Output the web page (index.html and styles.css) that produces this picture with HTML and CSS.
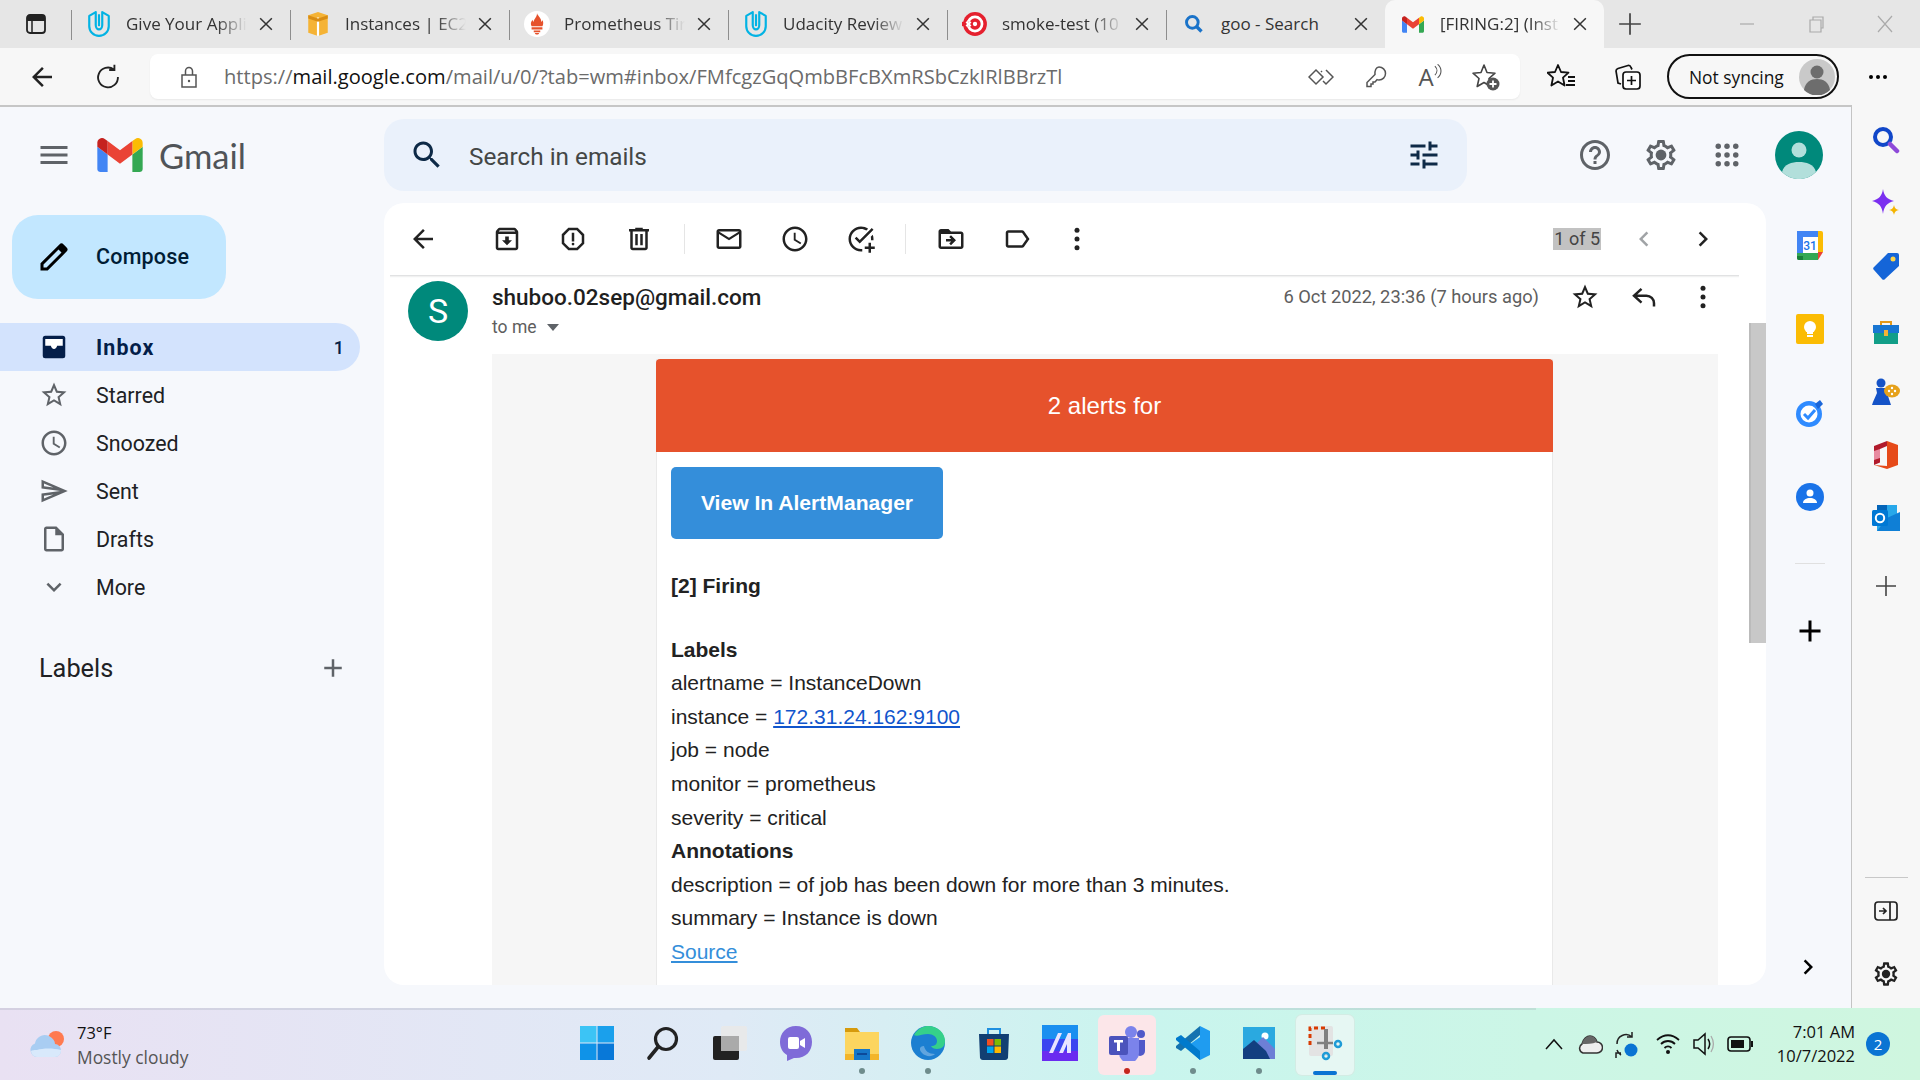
FILE: index.html
```html
<!DOCTYPE html>
<html lang="en">
<head>
<meta charset="utf-8">
<title>Gmail</title>
<link rel="stylesheet" href="styles.css">
</head>
<body>
<svg class="sprite" xmlns="http://www.w3.org/2000/svg">
<symbol id="m" viewBox="52 42 88 66"><path fill="#4285f4" d="M58 108h14V74L52 59v43c0 3.32 2.69 6 6 6"/><path fill="#34a853" d="M120 108h14c3.32 0 6-2.69 6-6V59l-20 15"/><path fill="#fbbc04" d="M120 48v26l20-15v-8c0-7.42-8.47-11.65-14.4-7.2"/><path fill="#ea4335" d="M72 74V48l24 18 24-18v26L96 92"/><path fill="#c5221f" d="M52 51v8l20 15V48l-5.6-4.2c-5.94-4.45-14.4-.22-14.4 7.2"/></symbol>
<symbol id="udacity" viewBox="0 0 24 24"><path fill="none" stroke="#02b3e4" stroke-width="2" stroke-linejoin="round" d="M3 4.500L9 1v12c0 2.500 1.500 4 3 4s3-1.500 3-4V1l6 3.500V14c0 5-4 9-9 9s-9-4-9-9z"/><path fill="none" stroke="#02b3e4" stroke-width="2" d="M12 3v11"/></symbol>
<symbol id="close" viewBox="0 0 24 24"><path fill="none" stroke="currentColor" stroke-width="1.8" d="M5 5l14 14M19 5L5 19"/></symbol>
<symbol id="thinplus" viewBox="0 0 24 24"><path fill="none" stroke="currentColor" stroke-width="1.6" d="M12 2v20M2 12h20"/></symbol>
<symbol id="menu" viewBox="0 0 24 24"><path d="M3 18h18v-2H3v2zm0-5h18v-2H3v2zm0-7v2h18V6H3z"/></symbol>
<symbol id="search" viewBox="0 0 24 24"><path d="M15.5 14h-.79l-.28-.27C15.41 12.59 16 11.11 16 9.5 16 5.91 13.09 3 9.5 3S3 5.91 3 9.5 5.91 16 9.5 16c1.61 0 3.09-.59 4.23-1.57l.27.28v.79l5 4.99L20.49 19l-4.99-5zm-6 0C7.01 14 5 11.99 5 9.5S7.01 5 9.5 5 14 7.01 14 9.5 11.99 14 9.5 14z"/></symbol>
<symbol id="tune" viewBox="0 0 24 24"><path d="M3 17v2h6v-2H3zM3 5v2h10V5H3zm10 16v-2h8v-2h-8v-2h-2v6h2zM7 9v2H3v2h4v2h2V9H7zm14 4v-2H11v2h10zm-6-4h2V7h4V5h-4V3h-2v6z"/></symbol>
<symbol id="help" viewBox="0 0 24 24"><path d="M11 18h2v-2h-2v2zm1-16C6.48 2 2 6.48 2 12s4.48 10 10 10 10-4.48 10-10S17.52 2 12 2zm0 18c-4.41 0-8-3.59-8-8s3.59-8 8-8 8 3.59 8 8-3.59 8-8 8zm0-14c-2.21 0-4 1.79-4 4h2c0-1.1.9-2 2-2s2 .9 2 2c0 2-3 1.75-3 5h2c0-2.25 3-2.5 3-5 0-2.21-1.79-4-4-4z"/></symbol>
<symbol id="gear" viewBox="0 0 24 24"><path d="M19.43 12.98c.04-.32.07-.64.07-.98 0-.34-.03-.66-.07-.98l2.11-1.65c.19-.15.24-.42.12-.64l-2-3.46c-.09-.16-.26-.25-.44-.25-.06 0-.12.01-.17.03l-2.49 1c-.52-.4-1.08-.73-1.69-.98l-.38-2.65C14.46 2.18 14.25 2 14 2h-4c-.25 0-.46.18-.49.42l-.38 2.65c-.61.25-1.17.59-1.69.98l-2.49-1c-.06-.02-.12-.03-.18-.03-.17 0-.34.09-.43.25l-2 3.46c-.13.22-.07.49.12.64l2.11 1.65c-.04.32-.07.65-.07.98 0 .33.03.66.07.98l-2.11 1.65c-.19.15-.24.42-.12.64l2 3.46c.09.16.26.25.44.25.06 0 .12-.01.17-.03l2.49-1c.52.4 1.08.73 1.69.98l.38 2.65c.03.24.24.42.49.42h4c.25 0 .46-.18.49-.42l.38-2.65c.61-.25 1.17-.59 1.69-.98l2.49 1c.06.02.12.03.18.03.17 0 .34-.09.43-.25l2-3.46c.12-.22.07-.49-.12-.64l-2.11-1.65zm-1.98-1.71c.04.31.05.52.05.73 0 .21-.02.43-.05.73l-.14 1.13.89.7 1.08.84-.7 1.21-1.27-.51-1.04-.42-.9.68c-.43.32-.84.56-1.25.73l-1.06.43-.16 1.13-.2 1.35h-1.4l-.19-1.35-.16-1.13-1.06-.43c-.43-.18-.83-.41-1.23-.71l-.91-.7-1.06.43-1.27.51-.7-1.21 1.08-.84.89-.7-.14-1.13c-.03-.31-.05-.54-.05-.74s.02-.43.05-.73l.14-1.13-.89-.7-1.08-.84.7-1.21 1.27.51 1.04.42.9-.68c.43-.32.84-.56 1.25-.73l1.06-.43.16-1.13.2-1.35h1.39l.19 1.35.16 1.13 1.06.43c.43.18.83.41 1.23.71l.91.7 1.06-.43 1.27-.51.7 1.21-1.07.85-.89.7.14 1.13z"/><circle cx="12" cy="12" r="3.6"/></symbol>
<symbol id="apps" viewBox="0 0 24 24"><g><circle cx="5" cy="5" r="2.2"/><circle cx="12" cy="5" r="2.2"/><circle cx="19" cy="5" r="2.2"/><circle cx="5" cy="12" r="2.2"/><circle cx="12" cy="12" r="2.2"/><circle cx="19" cy="12" r="2.2"/><circle cx="5" cy="19" r="2.2"/><circle cx="12" cy="19" r="2.2"/><circle cx="19" cy="19" r="2.2"/></g></symbol>
<symbol id="pencil" viewBox="0 0 24 24"><path d="M20.4 5.6l-2-2a2 2 0 0 0-2.8 0L3 16.2V21h4.8L20.4 8.4a2 2 0 0 0 0-2.8zM7 19H5v-2L15 7l2 2z"/></symbol>
<symbol id="inbox" viewBox="0 0 24 24"><rect x="3" y="3" width="18" height="18" rx="2" fill="#041e49"/><path d="M5 5.500h14V11h-4.500c-.3 1.500-1.300 2.500-2.500 2.500s-2.200-1-2.500-2.500H5z" fill="#fff"/></symbol>
<symbol id="star" viewBox="0 0 24 24"><path d="M22 9.24l-7.19-.62L12 2 9.19 8.63 2 9.24l5.46 4.73L5.82 21 12 17.27 18.18 21l-1.63-7.03L22 9.24zM12 15.4l-3.76 2.27 1-4.28-3.32-2.88 4.38-.38L12 6.1l1.71 4.04 4.38.38-3.32 2.88 1 4.28L12 15.4z"/></symbol>
<symbol id="clock" viewBox="0 0 24 24"><path d="M11.99 2C6.47 2 2 6.48 2 12s4.47 10 9.99 10C17.52 22 22 17.52 22 12S17.52 2 11.99 2zM12 20c-4.42 0-8-3.58-8-8s3.58-8 8-8 8 3.58 8 8-3.58 8-8 8zm.5-13H11v6l5.25 3.15.75-1.23-4.5-2.67z"/></symbol>
<symbol id="send" viewBox="0 0 24 24"><path d="M4.01 6.03l7.51 3.22-7.52-1 .01-2.22m7.5 8.72L4 17.97v-2.22l7.51-1M2.01 3L2 10l15 2-15 2 .01 7L23 12 2.01 3z"/></symbol>
<symbol id="draft" viewBox="0 0 24 24"><path d="M14 2H6c-1.100 0-2 .9-2 2v16c0 1.100.9 2 2 2h12c1.100 0 2-.9 2-2V8l-6-6zM6 20V4h7v5h5v11H6z"/></symbol>
<symbol id="expand" viewBox="0 0 24 24"><path d="M16.590 8.590L12 13.170 7.410 8.590 6 10l6 6 6-6z"/></symbol>
<symbol id="add" viewBox="0 0 24 24"><path d="M19 13h-6v6h-2v-6H5v-2h6V5h2v6h6v2z"/></symbol>
<symbol id="back" viewBox="0 0 24 24"><path d="M20 11H7.830l5.590-5.590L12 4l-8 8 8 8 1.410-1.410L7.830 13H20v-2z"/></symbol>
<symbol id="archive" viewBox="0 0 24 24"><path d="M20.540 5.230l-1.390-1.680C18.880 3.210 18.470 3 18 3H6c-.47 0-.88.21-1.160.55L3.460 5.230C3.170 5.570 3 6.020 3 6.500V19c0 1.100.9 2 2 2h14c1.100 0 2-.9 2-2V6.500c0-.48-.17-.93-.46-1.270zM6.240 5h11.520l.83 1H5.420l.82-1zM5 19V8h14v11H5zm8.450-9h-2.900v3H8l4 4 4-4h-2.550z"/></symbol>
<symbol id="report" viewBox="0 0 24 24"><path d="M15.730 3H8.270L3 8.270v7.460L8.270 21h7.460L21 15.730V8.270L15.730 3zM19 14.900L14.900 19H9.100L5 14.900V9.100L9.100 5h5.800L19 9.100v5.800z"/><path d="M11 7h2v7h-2z"/><circle cx="12" cy="16" r="1.100"/></symbol>
<symbol id="trash" viewBox="0 0 24 24"><path d="M15 4V3H9v1H4v2h1v13c0 1.100.9 2 2 2h10c1.100 0 2-.9 2-2V6h1V4h-5zm2 15H7V6h10v13zM9 8h2v9H9zm4 0h2v9h-2z"/></symbol>
<symbol id="mail" viewBox="0 0 24 24"><path d="M20 4H4c-1.100 0-2 .9-2 2v12c0 1.100.9 2 2 2h16c1.100 0 2-.9 2-2V6c0-1.100-.9-2-2-2zm0 14H4V8l8 5 8-5v10zm-8-7L4 6h16l-8 5z"/></symbol>
<symbol id="addtask" viewBox="0 0 24 24"><path d="M22 4.500L11 15.500l-4-4 1.400-1.400 2.600 2.600L20.600 3.100zM19.800 10.200c.13.57.2 1.170.2 1.800 0 .35-.02.68-.06 1h2.020c.03-.33.04-.66.04-1 0-1.190-.22-2.330-.6-3.390zM16.300 5.250l1.440-1.440C16.100 2.670 14.130 2 12 2 6.480 2 2 6.480 2 12s4.480 10 10 10c.34 0 .67-.01 1-.04v-2.020c-.33.04-.66.06-1 .06-4.420 0-8-3.580-8-8s3.580-8 8-8c1.580 0 3.040.46 4.300 1.250zM18 15h2v3h3v2h-3v3h-2v-3h-3v-2h3z"/></symbol>
<symbol id="move" viewBox="0 0 24 24"><path d="M20 6h-8l-2-2H4c-1.100 0-1.990.9-1.990 2L2 18c0 1.100.9 2 2 2h16c1.100 0 2-.9 2-2V8c0-1.100-.9-2-2-2zm0 12H4V8h16v10zm-8.010-9l-1.410 1.410L12.160 12H8v2h4.160l-1.590 1.590L11.990 17 16 13.010 11.990 9z"/></symbol>
<symbol id="label" viewBox="0 0 24 24"><path d="M17.630 5.840C17.270 5.330 16.670 5 16 5L5 5.010C3.900 5.010 3 5.900 3 7v10c0 1.100.9 1.990 2 1.990L16 19c.67 0 1.270-.33 1.630-.84L22 12l-4.370-6.160zM16 17H5V7h11l3.550 5L16 17z"/></symbol>
<symbol id="vert" viewBox="0 0 24 24"><circle cx="12" cy="5" r="2"/><circle cx="12" cy="12" r="2"/><circle cx="12" cy="19" r="2"/></symbol>
<symbol id="left" viewBox="0 0 24 24"><path d="M15.410 7.410L14 6l-6 6 6 6 1.410-1.410L10.830 12z"/></symbol>
<symbol id="right" viewBox="0 0 24 24"><path d="M10 6L8.590 7.410 13.170 12l-4.580 4.590L10 18l6-6z"/></symbol>
<symbol id="reply" viewBox="0 0 24 24"><path fill="none" stroke="currentColor" stroke-width="2" d="M10 5.500L4 11l6 5.500M4 11h10a6 6 0 0 1 6 6v2.500"/></symbol>
</svg>

<div class="browser">
  <header class="tabbar">
    <div class="tabbtn"><svg class="ic22" viewBox="0 0 22 22"><rect x="2" y="2" width="18" height="18" rx="3" fill="none" stroke="#222" stroke-width="1.800"/><path d="M2 5a3 3 0 0 1 3-3h12a3 3 0 0 1 3 3v3H2z" fill="#222"/><path d="M7 8v12" stroke="#222" stroke-width="1.500"/></svg></div>
    <div class="tab"><span class="tabsep"></span><svg class="fav"><use href="#udacity"/></svg><span class="tabtitle">Give Your Appli</span><svg class="tabx"><use href="#close"/></svg></div>
    <div class="tab"><span class="tabsep"></span><svg class="fav" viewBox="0 0 24 24"><path fill="#f5b335" d="M12 1l9 3v16l-9 3-9-3V4z"/><path fill="#fff" d="M11 6h2v17h-2z"/><path fill="#d98d14" d="M3 4l9 3 9-3v3l-9 3-9-3z"/></svg><span class="tabtitle">Instances | EC2</span><svg class="tabx"><use href="#close"/></svg></div>
    <div class="tab"><span class="tabsep"></span><svg class="fav" viewBox="0 0 24 24"><circle cx="12" cy="12" r="12" fill="#fff"/><path fill="#e6522c" d="M12 2c1 3 4 4 4 8 1-.5 1-1.500 1-2 1 2 1 4 0 6H7c-1-2-1-4 1-6 0 1 .5 1.500 1 2 0-3 3-4 3-8zM7 15h10v2H7zm2 3h6v1.500H9zm1 2.200h4c-.3 1-1 1.500-2 1.500s-1.700-.5-2-1.500z"/></svg><span class="tabtitle">Prometheus Tir</span><svg class="tabx"><use href="#close"/></svg></div>
    <div class="tab"><span class="tabsep"></span><svg class="fav"><use href="#udacity"/></svg><span class="tabtitle">Udacity Review</span><svg class="tabx"><use href="#close"/></svg></div>
    <div class="tab"><span class="tabsep"></span><svg class="fav" viewBox="0 0 24 24"><circle cx="12" cy="12" r="11" fill="#e5202e"/><circle cx="12" cy="12" r="6.500" fill="none" stroke="#fff" stroke-width="2.500"/><path stroke="#e5202e" stroke-width="4" d="M0 12h9"/><path stroke="#fff" stroke-width="2" d="M4 10l4 4M8 10l-4 4"/><circle cx="12" cy="12" r="2" fill="#fff"/></svg><span class="tabtitle">smoke-test (10</span><svg class="tabx"><use href="#close"/></svg></div>
    <div class="tab"><span class="tabsep"></span><svg class="fav favsmall" viewBox="0 0 24 24"><circle cx="10" cy="10" r="7" fill="none" stroke="#1a73c9" stroke-width="3.500"/><path stroke="#1a73c9" stroke-width="4" d="M15 15l6 6"/></svg><span class="tabtitle tabtitle-full">goo - Search</span><svg class="tabx"><use href="#close"/></svg></div>
    <div class="tab tab-active"><svg class="fav favm"><use href="#m"/></svg><span class="tabtitle">[FIRING:2] (Inst</span><svg class="tabx"><use href="#close"/></svg></div>
    <svg class="newtab"><use href="#thinplus"/></svg>
    <div class="winctl">
      <svg class="winbtn" viewBox="0 0 20 20"><path stroke="#aaa" stroke-width="1.200" d="M3 10h14"/></svg>
      <svg class="winbtn" viewBox="0 0 20 20"><path fill="none" stroke="#aaa" stroke-width="1.200" d="M4 6h11v12H4zM7 6V3h10v11h-2"/></svg>
      <svg class="winbtn" viewBox="0 0 20 20"><path stroke="#aaa" stroke-width="1.200" d="M3 2l14 16M17 2L3 18"/></svg>
    </div>
  </header>

  <div class="addrrow">
    <div class="navbtn"><svg class="ic30 dark"><use href="#back"/></svg></div>
    <div class="navbtn"><svg class="ic28" viewBox="0 0 24 24"><path fill="none" stroke="#222" stroke-width="1.600" d="M17 5.500A8.500 8.500 0 1 0 20.500 12M17.500 1.500v4.500H13"/></svg></div>
    <div class="addrbar">
      <svg class="lock" viewBox="0 0 24 24"><path fill="none" stroke="#555" stroke-width="1.500" d="M5 10h14v12H5zM8.500 10V6a3.500 3.500 0 0 1 7 0v4"/><circle cx="12" cy="16" r="1.200" fill="#555"/></svg>
      <div class="url">https://<b class="urlhost">mail.google.com</b>/mail/u/0/?tab=wm#inbox/FMfcgzGqQmbBFcBXmRSbCzkIRlBBrzTl</div>
      <div class="addric"><svg class="ic26" viewBox="0 0 26 26"><path fill="none" stroke="#555" stroke-width="1.500" d="M8 6l-7 7 7 7 7-7zM14 7l-1 1M18 6l7 7-7 7-3-3"/></svg></div>
      <div class="addric"><svg class="ic26" viewBox="0 0 26 26"><path fill="none" stroke="#555" stroke-width="1.500" d="M16 3a6.500 6.500 0 0 1 0 13c-1 0-1.500 0-2-.3L12 18h-2v2H8v2.500H4v-4l8-8c-.3-4 1-7.500 4-7.500z"/></svg></div>
      <div class="addric"><span class="readaloud">A</span><svg class="waves" viewBox="0 0 10 16"><path fill="none" stroke="#555" stroke-width="1.200" d="M1 2c3 3 3 7 0 10M4 0c5 4 5 11 0 15"/></svg></div>
      <div class="addric"><svg class="ic30" viewBox="0 0 30 30"><path fill="none" stroke="#444" stroke-width="1.600" stroke-linejoin="round" d="M13 3l3 7.500 8 .7-6 5.300 1.800 8-6.800-4-6.800 4 1.800-8-6-5.300 8-.7z"/><circle cx="22" cy="22" r="6.500" fill="#555"/><path stroke="#fff" stroke-width="1.800" d="M22 18.500v7M18.500 22h7"/></svg></div>
    </div>
    <div class="navbtn navfav"><svg class="ic30" viewBox="0 0 30 30"><path fill="none" stroke="#111" stroke-width="1.800" stroke-linejoin="round" d="M11 3l3 7 7.500.7-5.500 5 1.600 7.800-6.600-4-6.600 4 1.600-7.800-5.500-5 7.500-.7z"/><path stroke="#111" stroke-width="1.800" d="M21 15h7M21 19h7M19 23h9"/></svg></div>
    <div class="navbtn"><svg class="ic30" viewBox="0 0 30 30"><path fill="none" stroke="#111" stroke-width="1.700" d="M8 22l-3-1-2-12c0-1 .5-2 2-2.500l10-3c1.500-.3 2.500.5 3 2l1 2"/><rect x="10" y="10" width="17" height="17" rx="3" fill="#fff" stroke="#111" stroke-width="1.700"/><path stroke="#111" stroke-width="1.700" d="M18.500 14v9M14 18.500h9"/></svg></div>
    <div class="syncpill"><span class="synctext">Not syncing</span><svg class="syncav" viewBox="0 0 36 36"><circle cx="18" cy="18" r="18" fill="#c9c9c9"/><circle cx="18" cy="13" r="6.500" fill="#6d6d6d"/><path d="M5 31c1-8 7-11 13-11s12 3 13 11a18 18 0 0 1-26 0z" fill="#6d6d6d"/></svg></div>
    <div class="navbtn navdots"><svg class="ic24" viewBox="0 0 24 24"><circle cx="5" cy="12" r="2"/><circle cx="12" cy="12" r="2"/><circle cx="19" cy="12" r="2"/></svg></div>
  </div>

  <div class="workspace">
    <div class="gmail">
      <div class="logo">
        <svg class="ic36 grey hamb"><use href="#menu"/></svg>
        <svg class="mlogo"><use href="#m"/></svg>
        <span class="wordmark">Gmail</span>
      </div>
      <div class="topbar">
        <div class="searchbox">
          <svg class="ic36 navy"><use href="#search"/></svg>
          <span class="searchtext">Search in emails</span>
          <svg class="ic36 navy"><use href="#tune"/></svg>
        </div>
        <div class="topicon topfirst"><svg class="ic36 grey"><use href="#help"/></svg></div>
        <div class="topicon"><svg class="ic36 grey"><use href="#gear"/></svg></div>
        <div class="topicon"><svg class="ic30 grey"><use href="#apps"/></svg></div>
        <svg class="useravatar" viewBox="0 0 48 48"><circle cx="24" cy="24" r="24" fill="#00897b"/><circle cx="24" cy="19" r="7.500" fill="#b2dfdb"/><path d="M7 41c2-8 10-10 17-10s15 2 17 10a24 24 0 0 1-34 0z" fill="#b2dfdb"/></svg>
      </div>

      <nav class="nav">
        <div class="compose"><svg class="ic36 black"><use href="#pencil"/></svg><span class="composetxt">Compose</span></div>
        <ul class="navlist">
          <li class="navrow navrow-on"><svg class="ic30"><use href="#inbox"/></svg><span class="navlabel">Inbox</span><span class="navcount">1</span></li>
          <li class="navrow"><svg class="ic30 grey"><use href="#star"/></svg><span class="navlabel">Starred</span></li>
          <li class="navrow"><svg class="ic30 grey"><use href="#clock"/></svg><span class="navlabel">Snoozed</span></li>
          <li class="navrow"><svg class="ic30 grey"><use href="#send"/></svg><span class="navlabel">Sent</span></li>
          <li class="navrow"><svg class="ic30 grey"><use href="#draft"/></svg><span class="navlabel">Drafts</span></li>
          <li class="navrow"><svg class="ic30 grey"><use href="#expand"/></svg><span class="navlabel">More</span></li>
        </ul>
        <div class="labelsrow"><span class="labelstxt">Labels</span><svg class="ic30 grey"><use href="#add"/></svg></div>
      </nav>

      <main class="card">
        <div class="toolbar">
          <div class="tbtn tback"><svg class="ic30"><use href="#back"/></svg></div>
          <div class="tbtn tarch"><svg class="ic30"><use href="#archive"/></svg></div>
          <div class="tbtn"><svg class="ic30"><use href="#report"/></svg></div>
          <div class="tbtn"><svg class="ic30"><use href="#trash"/></svg></div>
          <span class="tdiv"></span>
          <div class="tbtn"><svg class="ic30"><use href="#mail"/></svg></div>
          <div class="tbtn"><svg class="ic30"><use href="#clock"/></svg></div>
          <div class="tbtn"><svg class="ic30"><use href="#addtask"/></svg></div>
          <span class="tdiv tdiv2"></span>
          <div class="tbtn"><svg class="ic30"><use href="#move"/></svg></div>
          <div class="tbtn"><svg class="ic30"><use href="#label"/></svg></div>
          <div class="tbtn tmore"><svg class="ic30"><use href="#vert"/></svg></div>
          <span class="pager">1 of 5</span>
          <div class="mbtn pagerprev"><svg class="ic30"><use href="#left"/></svg></div>
          <div class="mbtn"><svg class="ic30"><use href="#right"/></svg></div>
        </div>
        <div class="msgwrap">
          <div class="message">
            <div class="msghead">
              <div class="senderav">S</div>
              <div class="sender">
                <div class="sendername">shuboo.02sep@gmail.com</div>
                <div class="tome">to me <span class="caret"></span></div>
              </div>
              <span class="msgdate">6 Oct 2022, 23:36 (7 hours ago)</span>
              <div class="mbtn"><svg class="ic30"><use href="#star"/></svg></div>
              <div class="mbtn"><svg class="ic30"><use href="#reply"/></svg></div>
              <div class="mbtn"><svg class="ic30"><use href="#vert"/></svg></div>
            </div>
            <div class="mailbg">
              <div class="mailbox">
                <div class="alerthead">2 alerts for</div>
                <div class="alertbody">
                  <a class="alertbtn">View In AlertManager</a>
                  <p class="line strong firing">[2] Firing</p>
                  <p class="line strong labelshead">Labels</p>
                  <p class="line">alertname = InstanceDown</p>
                  <p class="line">instance = <a class="lnk">172.31.24.162:9100</a></p>
                  <p class="line">job = node</p>
                  <p class="line">monitor = prometheus</p>
                  <p class="line">severity = critical</p>
                  <p class="line strong">Annotations</p>
                  <p class="line">description = of job has been down for more than 3 minutes.</p>
                  <p class="line">summary = Instance is down</p>
                  <p class="line"><a class="lnk2">Source</a></p>
                </div>
              </div>
            </div>
          </div>
          <div class="scrolltrack"><div class="scrollthumb"></div></div>
        </div>
      </main>

      <aside class="rail">
        <div class="railitem"><svg class="ic32" viewBox="0 0 32 32"><path fill="#fff" d="M6 6h20v20H6z"/><path fill="#4285f4" d="M3 2h23v6H9v18H3z"/><path fill="#fbbc04" d="M24 2h3a2 2 0 0 1 2 2v19h-5z"/><path fill="#34a853" d="M3 24h21v7H5a2 2 0 0 1-2-2z"/><path fill="#188038" d="M3 27h6v4H5a2 2 0 0 1-2-2z"/><path fill="#ea4335" d="M24 31v-8h5z"/><text class="caltext" x="16" y="21" text-anchor="middle">31</text></svg></div>
        <div class="railitem"><svg class="ic32" viewBox="0 0 32 32"><rect x="2" y="1" width="28" height="30" rx="2" fill="#fbbc04"/><circle cx="16" cy="14" r="6" fill="#fff"/><path fill="#fff" d="M13 18h6v3h-6zm0 4h6v2h-6z"/></svg></div>
        <div class="railitem"><svg class="ic32" viewBox="0 0 32 32"><circle cx="15" cy="17" r="13" fill="#2f8bff"/><circle cx="15" cy="17" r="8.500" fill="#fff"/><path fill="none" stroke="#2f8bff" stroke-width="3" d="M10 17l4 4 7-8"/><path fill="#1a66d9" d="M21 7l5-4 3 4-5 5z"/></svg></div>
        <div class="railitem"><svg class="ic32" viewBox="0 0 32 32"><circle cx="16" cy="16" r="14" fill="#1a73e8"/><circle cx="16" cy="12" r="3.500" fill="#fff"/><path fill="#fff" d="M9 22c0-3.500 3.500-5 7-5s7 1.500 7 5z"/></svg></div>
        <span class="raildiv"></span>
        <div class="railplus"><svg class="ic30 black plus"><use href="#add"/></svg></div>
        <div class="railchev"><svg class="ic30 black"><use href="#right"/></svg></div>
      </aside>
    </div>

    <aside class="edgebar">
      <div class="edgeitem"><svg class="ic28" viewBox="0 0 28 28"><circle cx="11" cy="11" r="8" fill="none" stroke="#1147c9" stroke-width="4"/><path stroke="#8e4ad9" stroke-width="4.500" stroke-linecap="round" d="M18 18l7 7"/></svg></div>
      <div class="edgeitem"><svg class="ic28" viewBox="0 0 28 28"><path fill="#7b2ff0" d="M11 0c1 7 4 10 11 12-7 2-10 5-11 13C10 17 7 14 0 12 7 10 10 7 11 0z"/><path fill="#f4b400" d="M22 16c.5 3 2 4.500 5 5-3 .5-4.500 2-5 5-.5-3-2-4.500-5-5 3-.5 4.500-2 5-5z"/></svg></div>
      <div class="edgeitem"><svg class="ic28" viewBox="0 0 28 28"><path fill="#1565d8" d="M16 1h9a2 2 0 0 1 2 2v11L13 27a2 2 0 0 1-3 0l-8-9a2 2 0 0 1 0-3z"/><circle cx="21" cy="7" r="2.500" fill="#ffd54a"/></svg></div>
      <div class="edgeitem edgetool"><svg class="ic28" viewBox="0 0 28 28"><path fill="none" stroke="#e59a1a" stroke-width="2" d="M9 8V4h10v4"/><path fill="#1976d2" d="M1 7h26v8H1z"/><path fill="#129e88" d="M2 15h24v11H2z"/><rect x="12" y="12" width="4" height="6" fill="#f5b335"/></svg></div>
      <div class="edgeitem edgegames"><svg class="ic28" viewBox="0 0 28 28"><circle cx="9" cy="5" r="4.500" fill="#1553c7"/><path fill="#1553c7" d="M4 10h10l1 5 3 9 1 3H0l1-3 4-9z"/><ellipse cx="20" cy="13" rx="8" ry="6.500" fill="#e6a11a"/><g fill="#fff"><circle cx="17" cy="13" r="1.200"/><circle cx="23" cy="13" r="1.200"/><circle cx="20" cy="10" r="1.200"/><circle cx="20" cy="16" r="1.200"/></g></svg></div>
      <div class="edgeitem"><svg class="ic28" viewBox="0 0 28 28"><path fill="#e64a19" d="M15 0l11 4v20l-11 4-13-4 13 1V4z"/><path fill="#b11a2b" d="M15 0L2 5v19l6-2.500V8l7-3z"/><path fill="#e88aa0" d="M2 10l6-2v9l-6 2z"/></svg></div>
      <div class="edgeitem"><svg class="ic28" viewBox="0 0 28 28"><path fill="#28a8ea" d="M5 1h20v26H5z"/><path fill="#0364b8" d="M5 1h10v8H5z"/><path fill="#0f7fd6" d="M15 14l13-6v19H5z"/><rect x="0" y="6" width="16" height="16" rx="1.500" fill="#0078d4"/><circle cx="8" cy="14" r="4.200" fill="none" stroke="#fff" stroke-width="2"/></svg></div>
      <div class="edgeitem edgeplus"><svg class="ic24 grey2"><use href="#thinplus"/></svg></div>
      <div class="edgefoot">
        <span class="edgediv"></span>
        <div class="edgefooti"><svg class="ic26" viewBox="0 0 26 26"><rect x="2" y="4" width="22" height="18" rx="3" fill="none" stroke="#222" stroke-width="1.700"/><path stroke="#222" stroke-width="1.700" fill="none" d="M17 4v18M6 13h7M10 10l3 3-3 3"/></svg></div>
        <div class="edgefooti edgegear"><svg class="ic28 dark"><use href="#gear"/></svg></div>
      </div>
    </aside>
  </div>

  <footer class="taskbar">
    <div class="tbleft">
      <svg class="weather" viewBox="0 0 38 30"><circle cx="27" cy="10" r="8" fill="#ff7a50"/><path fill="#a9cdf2" d="M8 28a7 7 0 0 1-2-13.500C7 8 14 4 20 7c4 2 6 5 6 8a6.500 6.500 0 0 1 6 6.500 6.500 6.500 0 0 1-6 6.500z"/><path fill="#d8e9fb" d="M8 21c6-2 16-2 24 0v1a6 6 0 0 1-6 6H8a6 6 0 0 1-6-6c1-1 3-1 6-1z"/></svg>
      <div class="weathertxt"><div class="temp">73°F</div><div class="cond">Mostly cloudy</div></div>
    </div>
    <div class="tbcenter">
      <div class="tk"><svg class="ic36" viewBox="0 0 36 36"><path fill="#3cc4f5" d="M1 1h16.500v16.500H1z"/><path fill="#1aa0ec" d="M18.500 1H35v16.500H18.500z"/><path fill="#0f93e8" d="M1 18.500h16.500V35H1z"/><path fill="#0878d8" d="M18.500 18.500H35V35H18.500z"/></svg></div>
      <div class="tk"><svg class="ic36" viewBox="0 0 36 36"><circle cx="21" cy="14" r="10.500" fill="none" stroke="#222" stroke-width="3.200"/><path stroke="#222" stroke-width="3.600" stroke-linecap="round" d="M13 22l-9 11"/></svg></div>
      <div class="tk"><svg class="ic36" viewBox="0 0 36 36"><rect x="2" y="11" width="26" height="24" rx="2" fill="#222"/><rect x="10" y="1" width="26" height="25" rx="2" fill="#e9e9e9" fill-opacity=".9"/><rect x="10" y="11" width="18" height="15" fill="#aaa"/></svg></div>
      <div class="tk"><svg class="ic36" viewBox="0 0 36 36"><path fill="#7f6bd8" d="M18 1c10 0 16 7 16 16s-6 16-16 16h-2l-7 3v-6C4 27 2 22 2 17 2 8 8 1 18 1z"/><rect x="10" y="12" width="11" height="12" rx="2" fill="#fff"/><path fill="#fff" d="M22 16l5-3v10l-5-3z"/></svg></div>
      <div class="tk"><svg class="ic36" viewBox="0 0 36 36"><path fill="#d69a0c" d="M1 3h12l3 4h4v6H1z"/><path fill="#fcd55f" d="M1 7h34v28H1z"/><path fill="#f3b52a" d="M1 29h34v6H1z"/><path fill="#1677c9" d="M10 24h16v11H10z"/><path fill="#0c4a9a" d="M13 28h10v2H13z"/></svg><span class="dot"></span></div>
      <div class="tk"><svg class="ic36" viewBox="0 0 36 36"><circle cx="18" cy="18" r="17" fill="#1c7fd1"/><path fill="#35d08a" d="M4 10C8 3 14 1 18 1c10 0 17 7 17 15 0 5-3 8-8 8-3 0-5-1-6-3 4 0 6-2 6-5 0-4-4-7-9-7-6 0-11 3-14 1z"/><path fill="#fff" d="M14 21c1 5 5 8 11 8-3 3-9 3-13-1-3-3-3-7 2-7z" opacity=".3"/></svg><span class="dot"></span></div>
      <div class="tk"><svg class="ic36" viewBox="0 0 36 36"><path fill="none" stroke="#1f8fe0" stroke-width="2" d="M12 9V4h12v5"/><path fill="#123f73" d="M3 9h30l-1 24a3 3 0 0 1-3 2H7a3 3 0 0 1-3-2z"/><path fill="#f25022" d="M11 14h6.500v6.500H11z"/><path fill="#7fba00" d="M18.500 14H25v6.500h-6.500z"/><path fill="#00a4ef" d="M11 21.500h6.500V28H11z"/><path fill="#ffb900" d="M18.500 21.500H25V28h-6.500z"/></svg></div>
      <div class="tk"><svg class="ic36" viewBox="0 0 36 36"><path fill="#3a46f0" d="M0 0h36v36H0z"/><path fill="#1a8ff0" d="M0 0h36v14H0z"/><path fill="#6a2bf0" d="M0 26h36v10H0z"/><path fill="#e8e4ff" d="M7 28l9-20h4L11 28zM17 28l9-20h3v20h-4v-9l-4 9z"/></svg></div>
      <div class="tk tk-teams"><svg class="ic36" viewBox="0 0 36 36"><circle cx="22" cy="7" r="6" fill="#7b83eb"/><circle cx="32" cy="9" r="4" fill="#5059c9"/><path fill="#5059c9" d="M26 15h10v11a5 5 0 0 1-10 0z"/><path fill="#7b83eb" d="M10 13h20v15a9 9 0 0 1-20 0z"/><rect x="0" y="11" width="19" height="19" rx="2" fill="#4b53bc"/><path fill="#fff" d="M5 15h9v2.500h-3V26H8v-8.500H5z"/></svg><span class="dot dot-red"></span></div>
      <div class="tk"><svg class="ic36" viewBox="0 0 36 36"><path fill="#1f9cf0" d="M25 1l10 5v24l-10 5-14-13 14-10z"/><path fill="#0065a9" d="M25 1v9L6 26l-5-3v-2z" opacity=".9"/><path fill="#007acc" d="M1 13l5-3 19 16v9L1 15z"/></svg><span class="dot"></span></div>
      <div class="tk"><svg class="ic36" viewBox="0 0 36 36"><path fill="#2aa9e0" d="M2 2h32v32H2z"/><circle cx="24" cy="11" r="3.500" fill="#fff"/><path fill="#6d7fd6" d="M14 20l8-8 12 12v10H14z"/><path fill="#123f80" d="M2 24l11-9 12 11 4 8H2z"/></svg><span class="dot"></span></div>
      <div class="tk tk-snip"><svg class="ic36" viewBox="0 0 36 36"><rect x="2" y="1" width="24" height="30" rx="2" fill="#e3e3e3"/><path fill="none" stroke="#d83b01" stroke-width="3" stroke-dasharray="4 3" d="M3 20V3h16"/><path fill="#808080" d="M17 4h4v20h-4z"/><path stroke="#808080" stroke-width="2.500" d="M10 18h16"/><circle cx="31" cy="19" r="3" fill="none" stroke="#1e9bd7" stroke-width="2.500"/><circle cx="19" cy="31" r="3" fill="none" stroke="#1e9bd7" stroke-width="2.500"/></svg><span class="activebar"></span></div>
    </div>
    <div class="tbright">
      <div class="tray"><svg class="ic20" viewBox="0 0 20 20"><path fill="none" stroke="#111" stroke-width="1.500" d="M2 15l8-9 8 9"/></svg></div>
      <div class="tray"><svg class="ic26" viewBox="0 0 26 26"><path fill="#eee" stroke="#333" stroke-width="1.500" d="M6 22a5 5 0 0 1-1-9c1-5 5-8 8-8 4 0 6 3 7 6a5.500 5.500 0 0 1 0 11z"/><path fill="#666" d="M5 13c1-5 5-8 8-8 4 0 6 3 7 6-5 2-10 2-15 2z"/></svg></div>
      <div class="tray"><svg class="ic28" viewBox="0 0 28 28"><path fill="none" stroke="#222" stroke-width="1.500" d="M20 7A9 9 0 0 0 5 14M5 20a9 9 0 0 0 4 5M20 2v5h-5M4 28v-5h5"/><circle cx="19" cy="20" r="6.500" fill="#0a74d3"/></svg></div>
      <div class="tray traywifi"><svg class="ic26" viewBox="0 0 26 26"><path fill="none" stroke="#111" stroke-width="1.800" d="M2 9c7-6 15-6 22 0M6 13c4-4 10-4 14 0M9.500 17c2-2 5-2 7 0"/><circle cx="13" cy="21" r="2" fill="#111"/></svg></div>
      <div class="tray"><svg class="ic26" viewBox="0 0 26 26"><path fill="none" stroke="#111" stroke-width="1.500" d="M3 9h4l7-6v20l-7-6H3zM17 8c2 3 2 7 0 10"/><path fill="none" stroke="#aaa" stroke-width="1.300" d="M20 5c3 5 3 11 0 16"/></svg></div>
      <div class="tray"><svg class="ic28" viewBox="0 0 28 28"><rect x="2" y="7" width="22" height="14" rx="3" fill="none" stroke="#111" stroke-width="1.600"/><rect x="5" y="10" width="13" height="8" fill="#111"/><path fill="#111" d="M25 11h2v6h-2z"/></svg></div>
      <div class="clock"><div>7:01 AM</div><div>10/7/2022</div></div>
      <span class="notif">2</span>
    </div>
  </footer>
</div>
</body>
</html>
```

FILE: styles.css
```css
* { box-sizing: border-box; }
html, body { margin: 0; padding: 0; }
body { width: 1920px; height: 1080px; overflow: hidden; font-family: Roboto, "Liberation Sans", sans-serif; color: #202124; background: #f6f8fc; }
.sprite { display: none; }
svg { display: block; flex: none; }
ul { list-style: none; margin: 0; padding: 0; }
p { margin: 0; }

.ic20 { width: 20px; height: 20px; }
.ic22 { width: 22px; height: 22px; }
.ic24 { width: 24px; height: 24px; }
.ic26 { width: 26px; height: 26px; }
.ic28 { width: 28px; height: 28px; }
.ic30 { width: 30px; height: 30px; }
.ic32 { width: 32px; height: 32px; }
.ic36 { width: 36px; height: 36px; }
.grey { fill: #5f6368; color: #5f6368; }
.grey2 { color: #444; }
.navy { fill: #0e2a47; }
.black { fill: #000; }
.dark { fill: #222; }

.browser { display: flex; flex-direction: column; height: 1080px; }

/* Tabs */
.tabbar { display: flex; height: 48px; background: #e6e6e6; align-items: stretch; font-family: "Open Sans", "Liberation Sans", sans-serif; font-size: 17px; color: #333; }
.tabbtn { width: 71px; display: flex; align-items: center; justify-content: center; }
.tab { width: 219px; display: flex; align-items: center; position: relative; padding-left: 15px; }
.tabsep { position: absolute; left: 0; top: 10px; width: 1px; height: 30px; background: #8e8e8e; }
.fav { width: 26px; height: 26px; }
.favsmall { width: 20px; height: 20px; margin: 0 3px; }
.favm { width: 22px; height: 17px; margin: 0 2px; }
.tabtitle { width: 126px; margin-left: 14px; white-space: nowrap; -webkit-mask-image: linear-gradient(to right, #000 72%, transparent 96%); mask-image: linear-gradient(to right, #000 72%, transparent 96%); line-height: 48px; }
.tabtitle-full { -webkit-mask-image: none; mask-image: none; }
.tabx { width: 20px; height: 20px; margin-left: 4px; color: #333; }
.tab-active { background: #f7f7f7; border-radius: 10px 10px 0 0; }
.newtab { width: 26px; height: 26px; margin-left: 13px; align-self: center; color: #444; }
.winctl { margin-left: auto; display: flex; align-items: center; gap: 49px; padding-right: 25px; }
.winbtn { width: 20px; height: 20px; }

/* Address row */
.addrrow { display: flex; height: 57px; background: #f7f7f7; align-items: center; padding-left: 9px; font-family: "Open Sans", "Liberation Sans", sans-serif; }
.navbtn { width: 66px; display: flex; justify-content: center; align-items: center; }
.navfav { margin-left: 9px; }
.navdots { margin-left: 6px; }
.addrbar { width: 1370px; margin-left: 9px; height: 45px; background: #fff; border-radius: 8px; display: flex; align-items: center; padding: 0 7px 0 27px; box-shadow: 0 1px 2px rgba(0,0,0,.06); }
.lock { width: 24px; height: 24px; }
.url { margin-left: 23px; flex: 1; font-size: 20.100px; color: #6b6b6b; white-space: nowrap; overflow: hidden; }
.urlhost { font-weight: 400; color: #111; }
.addric { width: 55px; display: flex; align-items: center; justify-content: center; }
.readaloud { font-size: 24px; color: #555; line-height: 28px; }
.waves { width: 9px; height: 15px; margin-top: -10px; }
.syncpill { margin-left: 6px; width: 172px; height: 45px; border: 2px solid #111; border-radius: 23px; background: #f7f7f7; display: flex; align-items: center; justify-content: space-between; padding: 0 2px 0 20px; font-size: 17.400px; color: #111; }
.syncav { width: 36px; height: 36px; }

/* Gmail */
.workspace { display: flex; height: 903px; }
.gmail { width: 1851px; border-top: 2px solid #c6c6c6; background: #f6f8fc; display: grid; grid-template-columns: 384px 1382px 85px; grid-template-rows: 96px 805px; }
.logo { display: flex; align-items: center; padding-left: 36px; }
.mlogo { width: 46px; height: 34px; margin-left: 25px; }
.wordmark { font-family: Lato, Roboto, sans-serif; font-size: 34.500px; color: #505458; margin-left: 16px; }
.topbar { grid-column: 2 / 4; display: flex; align-items: center; }
.searchbox { width: 1083px; height: 72px; background: #eaf1fb; border-radius: 20px; display: flex; align-items: center; padding: 0 25px; }
.searchtext { flex: 1; margin-left: 24px; padding-top: 3px; font-size: 24.300px; color: #444746; }
.topicon { width: 66px; display: flex; justify-content: center; }
.topfirst { margin-left: 95px; }
.useravatar { width: 48px; height: 48px; margin-left: 15px; }

.nav { padding-top: 12px; }
.compose { width: 214px; height: 84px; margin-left: 12px; background: #c2e7ff; border-radius: 26px; display: flex; align-items: center; padding-left: 24px; color: #001d35; }
.composetxt { margin-left: 24px; padding-bottom: 2px; font-size: 21.500px; font-weight: 500; letter-spacing: .2px; }
.navlist { margin-top: 24px; }
.navrow { width: 360px; height: 48px; display: flex; align-items: center; padding-left: 39px; font-size: 21.400px; color: #202124; border-radius: 0 24px 24px 0; }
.navrow-on { background: #d3e3fd; color: #041e49; font-weight: 700; letter-spacing: 1.100px; }
.navlabel { margin-left: 27px; flex: 1; }
.navcount { font-size: 18px; font-weight: 500; letter-spacing: 0; margin-right: 16px; }
.labelsrow { margin-top: 33px; height: 48px; width: 360px; display: flex; align-items: center; justify-content: space-between; padding: 0 12px 0 39px; }
.labelstxt { font-size: 25.300px; color: #202124; }

/* Card */
.card { background: #fff; border-radius: 20px; height: 782px; display: flex; flex-direction: column; overflow: hidden; }
.toolbar { height: 72px; flex: none; display: flex; align-items: center; color: #222; fill: #222; position: relative; padding-right: 34px; box-shadow: 0 1px 2px rgba(60,64,67,.22); z-index: 1; clip-path: inset(0 27px -4px 6px); }
.tbtn { width: 66px; display: flex; justify-content: center; flex: none; }
.tback { margin-left: 6px; }
.tarch { margin-left: 18px; }
.tdiv { width: 1px; height: 30px; background: #e5e5e5; margin: 0 11px 0 12px; }
.tdiv2 { margin: 0 12px 0 11px; }
.tmore { margin-left: -6px; }
.pager { margin-left: auto; margin-right: 13px; background: #c2c2c2; padding: 0 1px; color: #444; height: 22px; line-height: 22px; font-size: 18px; }
.mbtn { width: 59px; display: flex; justify-content: center; flex: none; color: #222; fill: #222; }
.pagerprev { fill: #a0a3a6; }
.msgwrap { flex: 1; display: flex; min-height: 0; }
.message { width: 1365px; display: flex; flex-direction: column; }
.msghead { height: 79px; flex: none; display: flex; padding: 6px 17px 0 24px; }
.senderav { width: 60px; height: 60px; border-radius: 50%; background: #00897b; color: #fff; font-size: 34px; display: flex; align-items: center; justify-content: center; flex: none; }
.sender { margin-left: 24px; flex: 1; }
.sendername { font-size: 22.500px; font-weight: 500; color: #1f1f1f; line-height: 32px; }
.tome { font-size: 17.500px; color: #5e5e5e; line-height: 29px; display: flex; align-items: center; gap: 10px; }
.caret { width: 0; height: 0; border: 6px solid transparent; border-top: 7px solid #5f6368; border-bottom: 0; }
.msgdate { font-size: 18.300px; color: #5e5e5e; line-height: 32px; margin-right: 16px; }
.msghead .mbtn { height: 32px; align-items: center; }
.mailbg { margin-left: 108px; width: 1226px; flex: 1; min-height: 0; overflow: hidden; background: #f6f6f6; padding: 5px 0 0 164px; }
.mailbox { width: 897px; height: 100%; background: #fff; border: 1px solid #e9e9e9; border-width: 0 1px; font-family: "Liberation Sans", Arial, sans-serif; font-size: 21px; color: #222; }
.alerthead { height: 93px; background: #e6522c; border-radius: 4px 4px 0 0; color: #fff; font-size: 24px; display: flex; align-items: center; justify-content: center; margin: 0 -1px; }
.alertbody { padding: 15px 0 0 14px; }
.alertbtn { display: flex; width: 272px; height: 72px; align-items: center; justify-content: center; background: #348eda; border-radius: 5px; color: #fff; font-weight: 700; font-size: 21.100px; }
.line { line-height: 33.600px; white-space: nowrap; }
.strong { font-weight: 700; }
.firing { margin-top: 30px; }
.labelshead { margin-top: 30px; }
.lnk { color: #1155cc; text-decoration: underline; }
.lnk2 { color: #348eda; text-decoration: underline; }
.scrolltrack { width: 17px; flex: none; }
.scrollthumb { margin-top: 48px; height: 320px; background: #c8c8c8; border-left: 2px solid #bbb; }

/* Rail */
.rail { display: flex; flex-direction: column; align-items: center; padding-left: 3px; }
.railitem { height: 84px; display: flex; align-items: center; }
.raildiv { width: 30px; height: 1px; background: #e0e0e0; margin-top: 24px; flex: none; }
.railplus { margin-top: 25px; height: 84px; display: flex; align-items: center; }
.railplus .plus { width: 36px; height: 36px; }
.railchev { margin-top: auto; margin-bottom: 20px; margin-right: 4px; height: 42px; display: flex; align-items: center; }
.caltext { font-family: Roboto, sans-serif; font-size: 12px; font-weight: 500; fill: #1a73e8; }

/* Edge bar */
.edgebar { width: 69px; background: #f7f7f7; border-left: 1px solid #c4c4c4; display: flex; flex-direction: column; align-items: center; padding-top: 3px; }
.edgeitem { height: 63px; display: flex; align-items: center; flex: none; }
.edgetool { margin-top: 3px; margin-bottom: -3px; }
.edgeplus { margin-top: 5px; }
.edgefoot { margin-top: auto; width: 100%; display: flex; flex-direction: column; align-items: center; padding-bottom: 4px; }
.edgediv { width: 43px; height: 1px; background: #c8c8c8; }
.edgefooti { height: 66px; display: flex; align-items: center; }
.edgegear { height: 60px; }

/* Taskbar */
.taskbar { height: 72px; flex: none; position: relative; display: flex; background: linear-gradient(90deg, #e9e1f3 0%, #dfeaf6 38%, #c9f5ee 60%, #ccf6e6 80%, #cff6df 100%); }
.taskbar::before { content: ""; position: absolute; left: 0; top: 0; width: 1536px; height: 2px; background: rgba(150,160,170,.25); }
.tbleft { width: 564px; display: flex; align-items: center; padding-left: 29px; }
.weather { width: 38px; height: 30px; }
.weathertxt { margin-left: 10px; padding-top: 1px; font-family: "Open Sans", "Liberation Sans", sans-serif; font-size: 17.400px; line-height: 25px; }
.temp { color: #111; font-size: 16.500px; }
.cond { color: #555; }
.tbcenter { width: 795px; display: flex; }
.tk { width: 66.200px; height: 72px; display: flex; align-items: center; justify-content: center; position: relative; padding-bottom: 2px; }
.dot { position: absolute; left: 50%; margin-left: -3px; bottom: 6px; width: 6px; height: 6px; border-radius: 50%; background: #6f8c8c; }
.dot-red { background: #c4261d; }
.tk-teams::before, .tk-snip::before { content: ""; position: absolute; left: 4px; right: 4px; top: 7px; bottom: 5px; border-radius: 6px; }
.tk-teams::before { background: #fce6e9; }
.tk-snip::before { background: #e6f7f3; box-shadow: 0 0 0 1px #d3ece4; }
.tk > svg { position: relative; }
.activebar { position: absolute; left: 50%; margin-left: -12px; bottom: 5px; width: 24px; height: 4px; border-radius: 2px; background: #0a74d3; }
.tbright { flex: 1; display: flex; align-items: center; padding-left: 177px; font-family: "Open Sans", "Liberation Sans", sans-serif; }
.tray { width: 36px; display: flex; justify-content: center; flex: none; }
.traywifi { margin-left: 6px; }
.clock { width: 97px; text-align: right; font-size: 16.500px; line-height: 24px; color: #111; flex: none; }
.notif { margin-left: 11px; width: 24px; height: 24px; border-radius: 50%; background: #0a74d3; color: #fff; font-size: 15px; display: flex; align-items: center; justify-content: center; flex: none; }
```
